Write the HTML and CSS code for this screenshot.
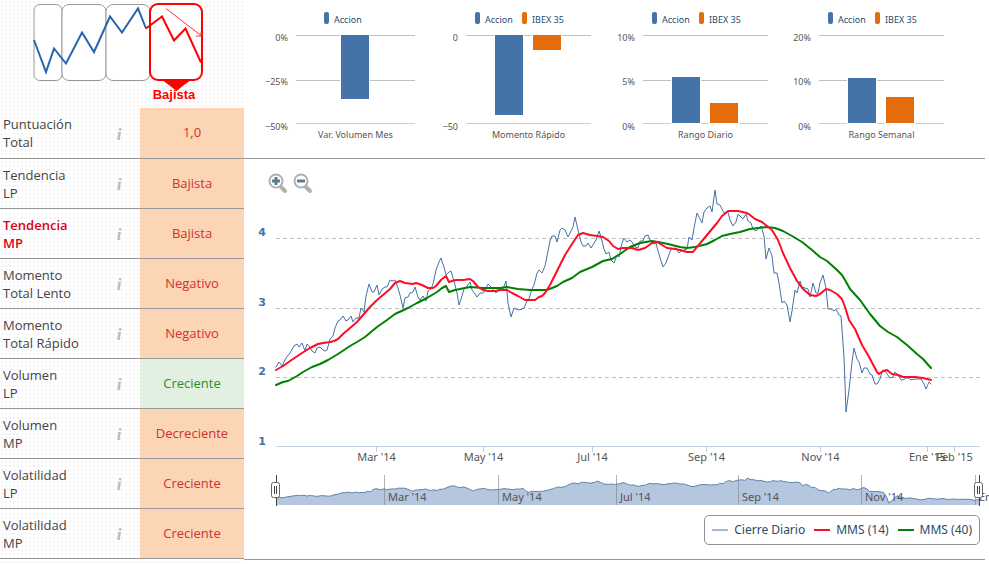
FILE: index.html
```
<!DOCTYPE html>
<html lang="es">

<head>
   <meta charset="utf-8">
   <meta name="viewport" content="width=device-width, initial-scale=1.0">
   <title>Indicadores</title>
   <link rel="stylesheet" href="styles.css">
</head>

<body>
   <div class="page">
      <aside class="sidebar">
         <svg class="trend" viewBox="0 0 244 108" role="img" aria-label="Fase bajista">
            <g class="phase">
               <rect x="34" y="4.500" width="28" height="76" rx="6" />
               <rect x="62" y="4.500" width="44" height="76" rx="7" />
               <rect x="106" y="4.500" width="44" height="76" rx="7" />
            </g>
            <rect class="phase-active" x="150" y="4" width="52" height="76" rx="8" />
            <path class="phase-up" d="M34 40 46 72 54 48.500 66 63.500 82 32.500 94 52 110 16.500 122 32.500 138 8.500 146 28.500" />
            <path class="phase-down" d="M146 28.500 162 16.500 174 40.500 185.500 28.500 201 62.500" />
            <path class="phase-arrow" d="M166 8.500 201 35.500M201 31.500V36H196" />
            <path class="phase-tip" d="M162 80H191L184 85 176.500 91 169 85Z" />
            <text class="phase-name" x="174" y="99">Bajista</text>
         </svg>

         <table class="scores">
            <tr>
               <th scope="row">Puntuación<br>Total</th>
               <td class="info">i</td>
               <td class="value down">1,0</td>
            </tr>
            <tr>
               <th scope="row">Tendencia<br>LP</th>
               <td class="info">i</td>
               <td class="value down">Bajista</td>
            </tr>
            <tr class="selected">
               <th scope="row">Tendencia<br>MP</th>
               <td class="info">i</td>
               <td class="value down">Bajista</td>
            </tr>
            <tr>
               <th scope="row">Momento<br>Total Lento</th>
               <td class="info">i</td>
               <td class="value down">Negativo</td>
            </tr>
            <tr>
               <th scope="row">Momento<br>Total Rápido</th>
               <td class="info">i</td>
               <td class="value down">Negativo</td>
            </tr>
            <tr>
               <th scope="row">Volumen<br>LP</th>
               <td class="info">i</td>
               <td class="value up">Creciente</td>
            </tr>
            <tr>
               <th scope="row">Volumen<br>MP</th>
               <td class="info">i</td>
               <td class="value down">Decreciente</td>
            </tr>
            <tr>
               <th scope="row">Volatilidad<br>LP</th>
               <td class="info">i</td>
               <td class="value down">Creciente</td>
            </tr>
            <tr>
               <th scope="row">Volatilidad<br>MP</th>
               <td class="info">i</td>
               <td class="value down">Creciente</td>
            </tr>
         </table>
      </aside>

      <main class="charts">
         <div class="bars" id="bars"></div>

         <section class="history">
            <div class="zoom">
               <button type="button" aria-label="Acercar">
                  <svg viewBox="0 0 20 21">
                     <path class="lens-handle" d="M13 14 17 18" />
                     <circle class="lens" cx="8" cy="8" r="6.500" />
                     <path class="lens-sign" d="M4 8H12M8 4V12" />
                  </svg>
               </button>
               <button type="button" aria-label="Alejar">
                  <svg viewBox="0 0 20 21">
                     <path class="lens-handle" d="M13 14 17 18" />
                     <circle class="lens" cx="8" cy="8" r="6.500" />
                     <path class="lens-sign" d="M4 8H12" />
                  </svg>
               </button>
            </div>

            <svg class="plot" id="plot" viewBox="244 159 741 348">
               <g class="grid">
                  <path d="M276 238.500H980M276 308.500H980M276 377.500H980" />
               </g>
               <g class="y-labels">
                  <text x="266" y="236">4</text>
                  <text x="266" y="306">3</text>
                  <text x="266" y="375">2</text>
                  <text x="266" y="445">1</text>
               </g>
               <path class="axis" d="M276 446.500H980" />
               <g id="x-axis"></g>
               <polyline class="line price" id="price" />
               <polyline class="line mms40" id="mms40" />
               <polyline class="line mms14" id="mms14" />
               <polygon class="nav-area" id="nav-area" />
               <polyline class="nav-line" id="nav-line" />
               <g id="nav-axis"></g>
               <g id="handles"></g>
            </svg>

            <ul class="legend">
               <li><span class="key key-price"></span>Cierre Diario</li>
               <li><span class="key key-mms14"></span>MMS (14)</li>
               <li><span class="key key-mms40"></span>MMS (40)</li>
            </ul>
         </section>
      </main>
   </div>

   <script src="charts.js"></script>
</body>

</html>
```
FILE: styles.css
```
body {
   margin: 0;
   background: #fff;
   font-family: "Open Sans", "Liberation Sans", sans-serif;
   font-size: 13px;
   line-height: 18px;
   color: #444;
   overflow-x: hidden;
}

.page {
   display: grid;
   grid-template-columns: 244px minmax(0, 1fr);
   align-items: start;
}

/* Sidebar */
.sidebar {
   background-image: radial-gradient(circle, #f5f5f5 1px, transparent 1px);
   background-size: 4px 4px;
   padding-bottom: 5px;
}

.trend {
   display: block;
   width: 100%;
}

.phase rect {
   fill: #fff;
   stroke: #999;
}

.phase-active {
   fill: #fff;
   stroke: #f00;
   stroke-width: 2;
}

.phase-up,
.phase-down,
.phase-arrow {
   fill: none;
   stroke-width: 2;
}

.phase-up {
   stroke: #2766ae;
}

.phase-down {
   stroke: #f00;
}

.phase-arrow {
   stroke: #f33;
   stroke-width: 1;
}

.phase-tip {
   fill: #f00;
}

.phase-name {
   fill: #f00;
   font: bold 13px "Liberation Sans", sans-serif;
   text-anchor: middle;
}

.scores {
   width: 100%;
   border-collapse: separate;
   border-spacing: 0;
   table-layout: fixed;
}

.scores tr {
   height: 50px;
}

.scores tr:first-child {
   height: 51px;
}

.scores th,
.scores td {
   box-sizing: border-box;
   padding: 0;
   border-bottom: 1px solid #999;
   vertical-align: middle;
}

.scores th {
   width: 98px;
   padding-left: 3px;
   font-weight: normal;
   text-align: left;
   white-space: nowrap;
}

.scores .info {
   width: 42px;
   padding-top: 3px;
   font: italic bold 17px "Liberation Serif", serif;
   color: #bbb;
   text-align: center;
}

.scores .value {
   padding-bottom: 2px;
   text-align: center;
}

.value.down {
   background: #fcd5b4;
   color: #c33;
}

.value.up {
   background: #e2f0e2;
   color: #2c8c2c;
}

.scores .selected th {
   color: #d9001b;
   font-weight: 600;
}

/* Charts */
.charts {
   margin-right: 4px;
   font-family: "Noto Sans", sans-serif;
}

.bars {
   display: grid;
   grid-template-columns: repeat(4, 1fr);
   padding: 0 19px 0 18px;
   border-bottom: 1px solid #999;
}

.bars svg {
   display: block;
   width: 100%;
   font-size: 9px;
}

.bars text {
   fill: #555;
}

.bars .name {
   fill: #274b6d;
}

.bars .tick {
   text-anchor: end;
}

.bars .title {
   text-anchor: middle;
}

.bars .rule {
   stroke: #c0c0c0;
}

.bars .base {
   stroke: #c0d0e0;
}

.bars .bar {
   stroke: #fff;
}

.accion {
   fill: #4572a7;
}

.ibex {
   fill: #e46c0a;
}

.history {
   position: relative;
   padding-bottom: 14px;
   border-bottom: 1px solid #999;
}

.zoom {
   position: absolute;
   top: 14px;
   left: 24px;
   display: flex;
   gap: 5px;
}

.zoom button {
   width: 20px;
   height: 21px;
   padding: 0;
   border: 0;
   background: none;
   cursor: pointer;
}

.zoom svg {
   display: block;
}

.lens {
   fill: #fff;
   stroke: #b0b0b0;
   stroke-width: 2;
}

.lens-handle {
   stroke: #b0b0b0;
   stroke-width: 4;
   stroke-linecap: round;
}

.lens-sign {
   stroke: #5b7c91;
   stroke-width: 3;
}

.plot {
   display: block;
   width: 100%;
   overflow: visible;
   font-size: 11px;
}

.plot text {
   fill: #555;
}

.plot .y-labels text {
   fill: #4572a7;
   font: bold 11px "DejaVu Sans", sans-serif;
   text-anchor: end;
}

.plot .x-label {
   text-anchor: middle;
}

.grid {
   stroke: #c0c0c0;
   stroke-dasharray: 4 3;
}

.axis {
   stroke: #c0d0e0;
}

.line,
.nav-line {
   fill: none;
   stroke-linejoin: round;
   stroke-linecap: round;
}

.price {
   stroke: #4572a7;
}

.mms14 {
   stroke: #ff0d26;
   stroke-width: 2;
}

.mms40 {
   stroke: #008000;
   stroke-width: 2;
}

.nav-line {
   stroke: #5f83ad;
}

.nav-area {
   fill: #b4c7de;
}

.nav-rule {
   stroke: #808080;
   stroke-opacity: 0.6;
}

.handle-line {
   stroke: #444;
}

.handle-grip {
   fill: #fff;
   stroke: #666;
}

.legend {
   display: flex;
   gap: 9px;
   width: max-content;
   margin: 8px 5px 0 auto;
   padding: 5px 7px;
   border: 1px solid #909090;
   border-radius: 5px;
   list-style: none;
   font-size: 12px;
   color: #274b6d;
}

.legend li {
   display: flex;
   align-items: center;
   gap: 6px;
}

.key {
   width: 16px;
   height: 2px;
}

.key-price {
   background: #a3b8d3;
}

.key-mms14 {
   background: #ff0d26;
}

.key-mms40 {
   background: #008000;
}
```
FILE: charts.js
```
const bars = [
   { title: "Var. Volumen Mes", ticks: ["0%", "−25%", "−50%"], left: 34, tickX: 26, legendX: 62, bars: [[79, 35, 64, "accion"]] },
   { title: "Momento Rápido", ticks: ["0", "", "−50"], left: 28, tickX: 20, legendX: 37, bars: [[57, 35, 80, "accion"], [95, 35, 15, "ibex"]] },
   { title: "Rango Diario", ticks: ["10%", "5%", "0%"], left: 29, tickX: 21, legendX: 38, bars: [[58, 77, 46, "accion"], [96, 103, 20, "ibex"]] },
   { title: "Rango Semanal", ticks: ["20%", "10%", "0%"], left: 29, tickX: 21, legendX: 38, bars: [[58, 78, 45, "accion"], [96, 97, 26, "ibex"]] }
];

const names = { accion: "Accion", ibex: "IBEX 35" };
const rows = [35.5, 80.5, 123.5];

document.getElementById("bars").innerHTML = bars.map((chart) => {
   const right = chart.left === 34 ? 153 : chart.left + 125;
   let out = "";

   chart.ticks.forEach((tick, i) => {
      if (!tick) return;
      out += `<path class="${i === 2 ? "base" : "rule"}" d="M${chart.left} ${rows[i]}H${right}"/>`;
      out += `<text class="tick" x="${chart.tickX}" y="${[41, 85, 130][i]}">${tick}</text>`;
   });

   chart.bars.forEach(([x, y, height, type], i) => {
      const keyX = chart.legendX + i * 47;
      out += `<rect class="bar ${type}" x="${x - 0.5}" y="${y - 0.5}" width="29" height="${height + 1}"/>`;
      out += `<rect class="${type}" x="${keyX}" y="12" width="5" height="12" rx="2"/>`;
      out += `<text class="name" x="${keyX + 10}" y="23">${names[type]}</text>`;
   });

   out += `<text class="title" x="${(chart.left + right) / 2}" y="138">${chart.title}</text>`;
   return `<svg viewBox="0 0 176 158">${out}</svg>`;
}).join("");

const price = [
   276,367, 279,362, 282,366, 286,358, 290,353, 294,346, 297,344, 299,347, 302,343, 305,351, 307,344, 309,346,
   312,351, 315,353, 317,348, 320,347, 323,350, 325,351, 327,350, 330,339, 333,336, 335,328, 338,321, 340,320,
   343,316, 346,321, 348,320, 351,316, 353,322, 356,318, 359,318, 361,308, 364,312, 366,296, 369,284, 372,292,
   374,292, 377,285, 379,295, 382,289, 385,287, 387,287, 390,280, 392,281, 395,280, 398,288, 400,295, 403,308,
   405,298, 408,297, 410,293, 413,292, 415,287, 418,297, 420,300, 423,296, 426,301, 428,291, 431,289, 433,284,
   436,270, 439,262, 441,258, 444,267, 446,275, 449,272, 451,271, 454,281, 457,293, 459,305, 462,296, 464,289,
   467,286, 470,282, 472,290, 475,294, 477,297, 480,293, 483,293, 485,290, 488,284, 491,287, 496,293, 499,290,
   501,287, 503,289, 506,281, 508,303, 511,317, 514,308, 516,309, 519,310, 522,309, 524,308, 527,301, 529,299,
   532,289, 534,285, 537,273, 539,270, 542,273, 545,266, 547,256, 550,241, 552,236, 555,236, 557,242, 560,230,
   562,228, 565,230, 568,237, 573,227, 575,217, 578,230, 581,242, 583,246, 586,246, 588,243, 591,248, 596,240,
   599,231, 601,237, 604,249, 606,254, 609,252, 611,260, 614,263, 617,255, 619,257, 622,243, 624,238, 627,242,
   630,240, 632,242, 635,247, 638,248, 640,241, 643,241, 645,236, 648,235, 650,240, 653,244, 656,243, 658,251,
   661,261, 663,267, 666,263, 671,249, 676,248, 679,253, 681,251, 684,250, 687,249, 689,237, 692,240, 694,228,
   697,213, 699,217, 702,223, 704,212, 707,208, 710,206, 712,212, 715,190, 717,204, 720,205, 723,211, 725,214,
   728,212, 730,220, 733,226, 736,222, 738,214, 741,217, 743,219, 746,214, 748,221, 751,223, 753,229, 756,231,
   759,228, 761,226, 764,236, 766,259, 769,248, 772,256, 774,273, 777,273, 779,283, 782,303, 784,301, 787,305,
   790,322, 792,311, 795,290, 797,293, 800,281, 802,287, 808,289, 810,297, 813,283, 816,293, 818,293, 820,283,
   823,275, 826,288, 828,309, 831,309, 834,311, 836,309, 839,315, 841,316, 844,357, 846,412, 849,390, 852,362,
   854,348, 857,359, 859,362, 862,373, 864,368, 867,368, 870,374, 872,375, 875,384, 877,384, 880,379, 882,372,
   885,371, 890,378, 893,377, 895,372, 898,375, 901,380, 903,380, 906,378, 909,378, 911,380, 914,379, 921,379,
   924,384, 926,389, 929,382, 931,384
];

const mms14 = [
   276,370, 283,366, 293,359, 302,353, 310,348, 318,344, 323,343, 330,342, 334,341, 338,339, 343,334, 350,328,
   357,322, 363,315, 370,307, 377,300, 383,295, 390,289, 395,283, 400,281, 405,283, 413,284, 416,283, 422,285,
   428,288, 433,288, 436,286, 441,280, 446,276, 449,282, 452,281, 456,280, 463,280, 470,279, 473,281, 478,287,
   483,290, 488,291, 495,291, 500,290, 507,290, 512,293, 518,296, 525,300, 530,300, 535,300, 539,297, 542,296,
   545,293, 550,285, 555,275, 560,265, 565,255, 572,244, 578,235, 583,233, 590,235, 597,236, 603,237, 609,241,
   613,246, 618,249, 623,248, 632,248, 638,250, 645,248, 652,243, 657,242, 662,245, 667,248, 675,249, 680,250,
   687,252, 693,252, 697,247, 702,241, 707,235, 712,229, 717,223, 722,216, 728,211, 738,211, 747,213, 750,215,
   755,219, 762,222, 767,226, 772,230, 778,240, 783,253, 790,268, 797,281, 803,289, 810,295, 816,296, 820,294,
   826,289, 830,290, 837,294, 842,299, 845,307, 849,320, 855,329, 862,345, 868,355, 877,372, 879,374, 883,371,
   887,370, 892,374, 898,375, 903,377, 915,377, 923,378, 931,380
];

const mms40 = [
   276,385, 283,382, 288,381, 297,376, 303,372, 312,367, 320,364, 328,360, 338,354, 350,346, 357,342, 365,337,
   377,327, 387,320, 395,314, 408,308, 417,303, 427,298, 437,292, 442,288, 446,286, 449,292, 455,290, 470,287,
   483,288, 500,288, 507,287, 518,289, 530,290, 547,290, 557,286, 563,282, 572,278, 580,272, 592,267, 603,261,
   612,259, 620,254, 630,247, 640,243, 652,241, 658,242, 668,244, 680,247, 687,248, 695,247, 707,244, 715,240,
   722,236, 730,234, 740,232, 750,229, 767,227, 775,228, 783,231, 792,236, 802,242, 812,250, 820,257, 827,261,
   837,270, 842,275, 845,280, 850,289, 860,300, 870,314, 880,326, 888,332, 897,337, 907,345, 917,354, 923,359,
   931,368
];

function setPoints(id, points) {
   document.getElementById(id).setAttribute("points", points.join(" "));
}

setPoints("price", price);
setPoints("mms14", mms14);
setPoints("mms40", mms40);

// The navigator shows the same prices, stretched to the full width
const navPrice = price.map((v, i) => i % 2 === 0 ? 276 + (v - 276) * 704 / 655 : 478 + (v - 190) * 25 / 222);
setPoints("nav-line", navPrice);
setPoints("nav-area", [...navPrice, 980, 505, 276, 505]);

const xTicks = [[376, "Mar '14"], [483, "May '14"], [592, "Jul '14"], [706, "Sep '14"], [820, "Nov '14"], [927, "Ene '15"], [954, "Feb '15"]];
document.getElementById("x-axis").innerHTML = xTicks.map(([x, label]) =>
   `<path class="axis" d="M${x + 0.5} 447V452"/><text class="x-label" x="${x + 0.5}" y="461">${label}</text>`
).join("");

const navTicks = [[384, "Mar '14"], [498, "May '14"], [616, "Jul '14"], [738, "Sep '14"], [861, "Nov '14"], [975, "Ene '15"]];
document.getElementById("nav-axis").innerHTML = navTicks.map(([x, label]) =>
   `<path class="nav-rule" d="M${x + 0.5} 475V505"/><text x="${x + 4}" y="501">${label}</text>`
).join("");

document.getElementById("handles").innerHTML = [276, 979].map((x) =>
   `<path class="handle-line" d="M${x + 0.5} 475V506"/>
   <rect class="handle-grip" x="${x - 4.5}" y="482.5" width="8" height="15" rx="2"/>
   <path class="handle-line" d="M${x - 1.5} 486V494M${x + 0.5} 486V494"/>`
).join("");
```
